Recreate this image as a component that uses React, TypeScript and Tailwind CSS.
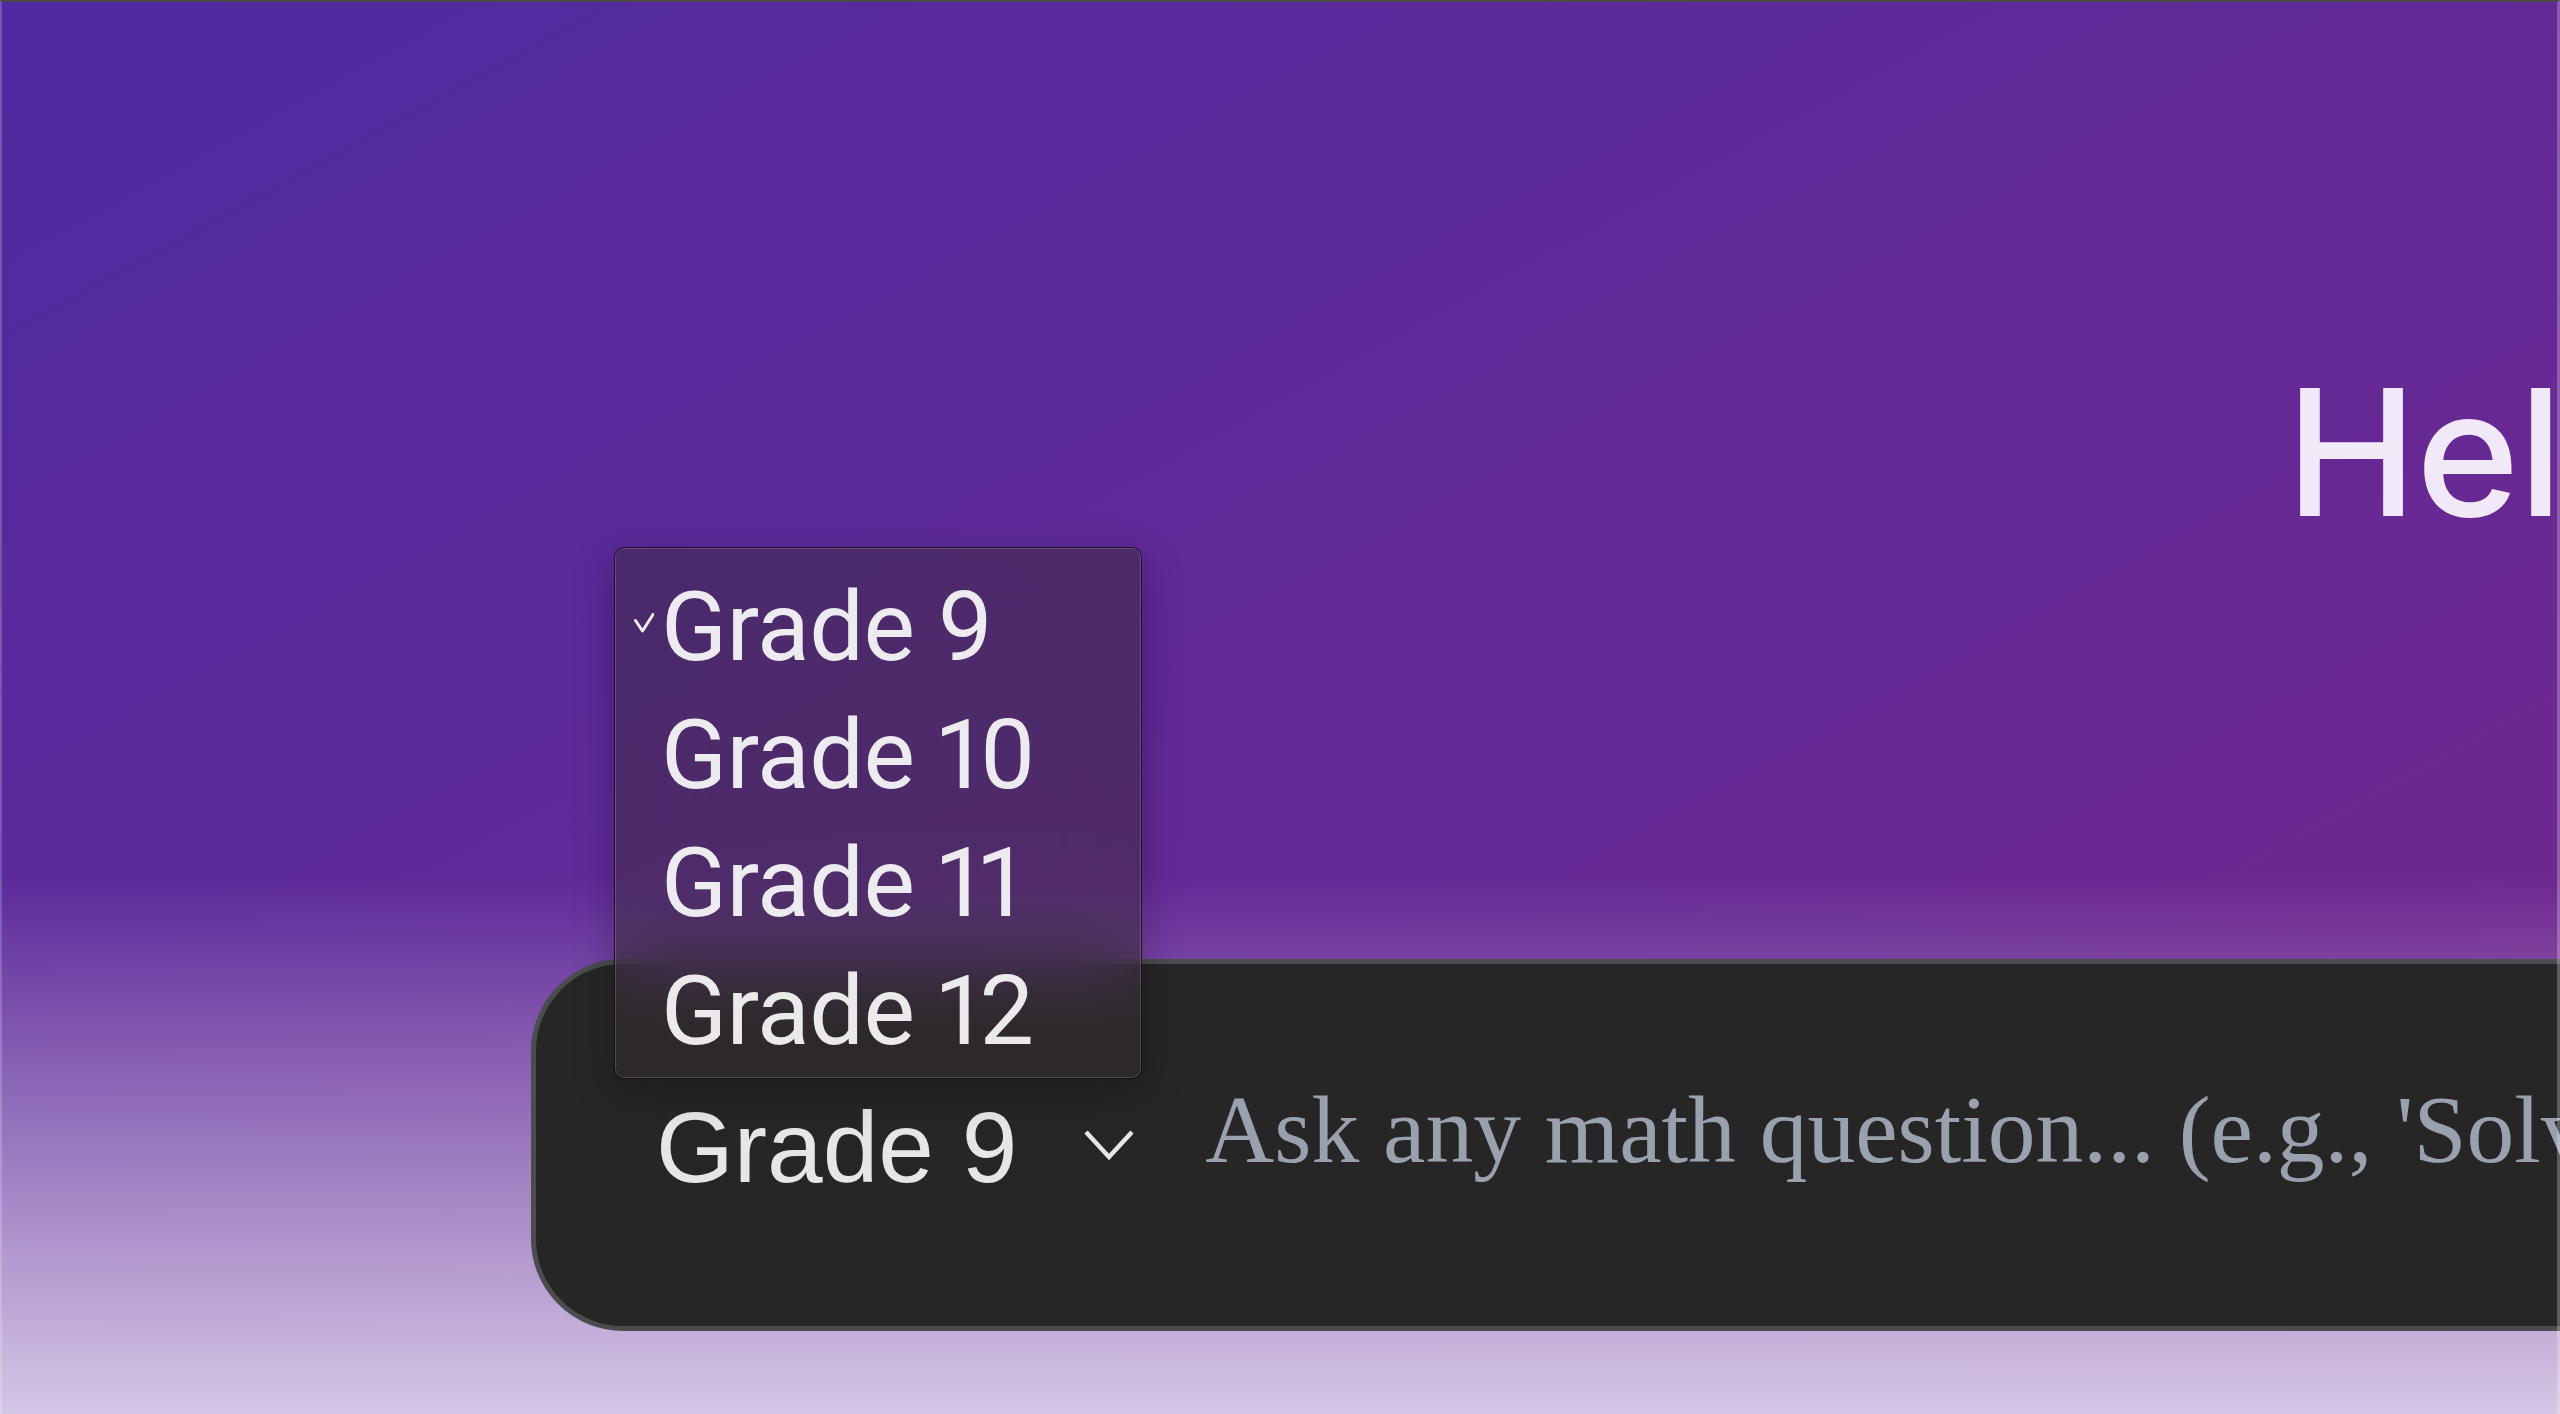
import React from "react";

const grades = ["Grade 9", "Grade 10", "Grade 11", "Grade 12"];

function Check() {
  return (
    <svg width="20" height="20" viewBox="0 0 20 20" fill="none" className="mb-[8px] shrink-0">
      <polyline points="1.5,7.5 8.5,18 19,1.5" stroke="rgba(255,255,255,0.9)" strokeWidth="3" strokeLinejoin="round" strokeLinecap="round" fill="none" />
    </svg>
  );
}

function Chevron() {
  return (
    <svg width="52" height="32" viewBox="0 0 52 32" fill="none" className="ml-[66px] shrink-0">
      <polyline points="3,3 26,28 49,3" stroke="#e6e6e8" strokeWidth="4.5" fill="none" />
    </svg>
  );
}

export default function App() {
  return (
    <div className="relative h-[1414px] w-full overflow-hidden bg-[linear-gradient(to_bottom,rgba(216,204,232,0)_62%,rgba(216,204,232,0.97)_100%),linear-gradient(to_bottom_right,#4f2aa1,#74288c)]">
      {/* Heading */}
      <div className="pt-[364px] pl-[2286px] whitespace-nowrap font-['Inter',sans-serif] text-[176px] font-medium leading-none tracking-[-1px] text-[#f1e9f7]">
        Hello
      </div>

      {/* Input card */}
      <div className="mt-[419px] ml-[531px] flex h-[372px] w-[2600px] items-center rounded-[92px] border-[5px] border-[#4a4c50] bg-[#262626] pl-[120px]">
        <div className="mt-[4px] whitespace-nowrap font-['Liberation_Sans',Arial,sans-serif] text-[100px] leading-none text-[#e6e6e8]">
          Grade 9
        </div>
        <Chevron />
        <div className="ml-[70px] mb-[29px] whitespace-nowrap font-['Liberation_Serif','Times_New_Roman',serif] text-[95.5px] leading-none text-gray-400">
          Ask any math question... (e.g., 'Solve 2x + 5 = 15')
        </div>
      </div>

      {/* Open dropdown menu */}
      <div className="absolute left-[614px] top-[547px] w-[528px] h-[532px] rounded-[10px] border border-black/60 bg-[rgba(55,45,50,0.45)] pt-[15px] pb-[3px] shadow-[inset_0_0_0_1px_rgba(255,255,255,0.16),0_12px_40px_rgba(0,0,0,0.25)] backdrop-blur-2xl">
        {grades.map((g, i) => (
          <div key={g} className="flex h-[128px] items-center pl-[19px]">
            <div className="flex w-[20px] items-center">{i === 0 ? <Check /> : null}</div>
            <span className="ml-[7px] whitespace-nowrap font-['Roboto',sans-serif] text-[97px] leading-[128px] tracking-[-0.5px] proportional-nums text-white/90">
              {g}
            </span>
          </div>
        ))}
      </div>

      {/* Window frame edges */}
      <div className="pointer-events-none absolute inset-0 border-t-2 border-l-2 border-r-[3px] border-t-[#4b4b47] border-l-white/20 border-r-white/25" />
    </div>
  );
}
